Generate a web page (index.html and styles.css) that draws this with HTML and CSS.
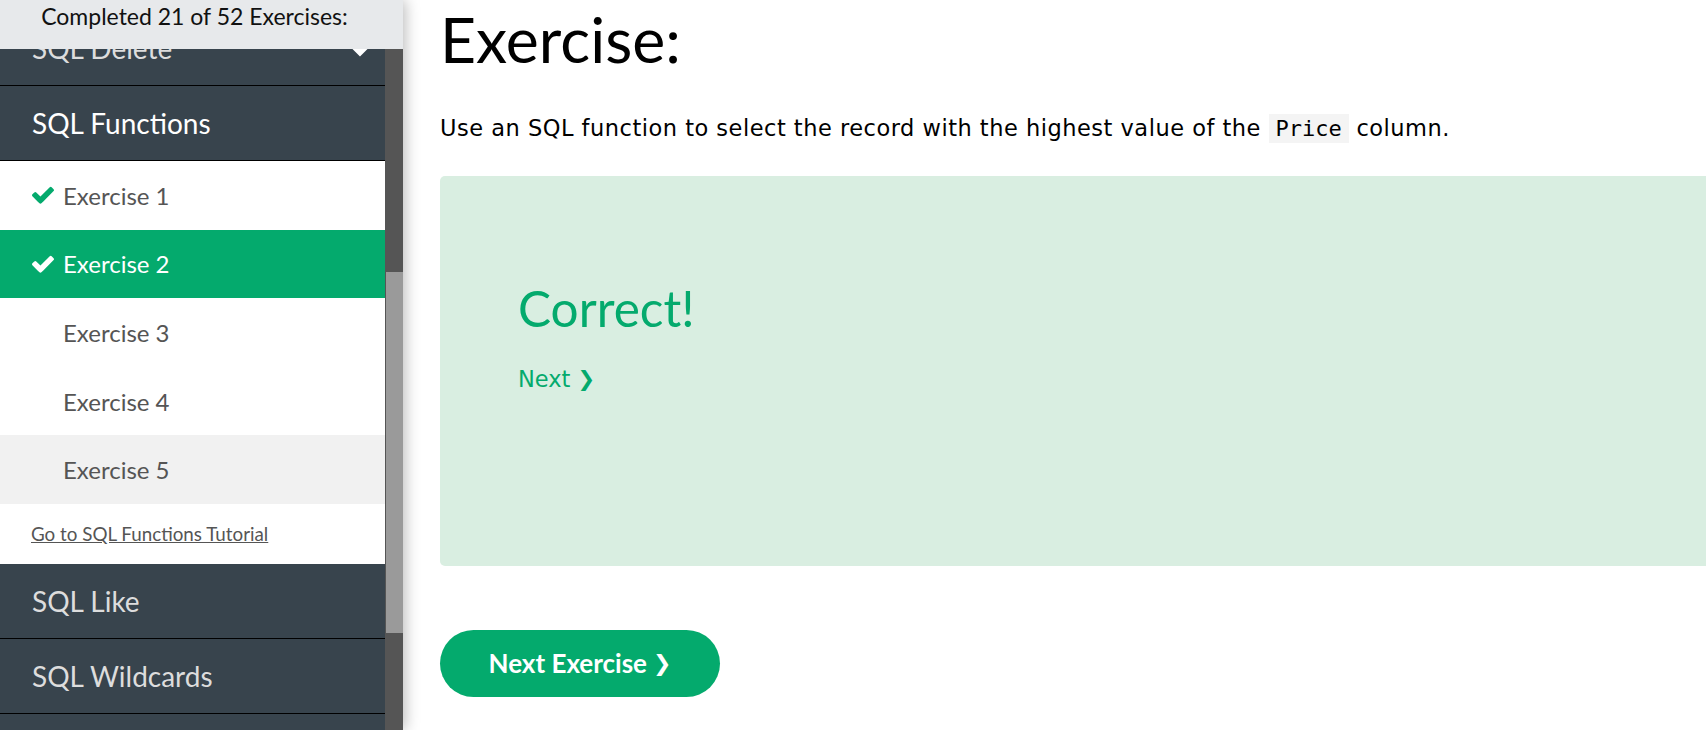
FILE: index.html
```html
<!DOCTYPE html>
<html lang="en">
<head>
<meta charset="utf-8">
<title>SQL Exercise</title>
<link rel="stylesheet" href="styles.css">
</head>
<body>
<div class="page">
  <aside class="sidebar">
    <div class="progress">Completed 21 of 52 Exercises:</div>
    <div class="side-body">
      <nav class="menu">
        <div class="cat cat-cut">
          <span>SQL Delete</span>
          <svg class="caret" viewBox="0 0 30 20" width="30" height="20"><polyline points="3,3 15,15 27,3" fill="none" stroke="#fff" stroke-width="5"/></svg>
        </div>
        <div class="cat cat-active">SQL Functions</div>
        <ul class="ex-list">
          <li class="ex done"><span class="icon"><svg viewBox="121 290 1550 1236" width="22" height="18"><path fill="#04AA6D" d="M1671 566q0 40-28 68l-724 724-136 136q-28 28-68 28t-68-28l-136-136-362-362q-28-28-28-68t28-68l136-136q28-28 68-28t68 28l294 295 656-657q28-28 68-28t68 28l136 136q28 28 28 68z"/></svg></span>Exercise 1</li>
          <li class="ex done current"><span class="icon"><svg viewBox="121 290 1550 1236" width="22" height="18"><path fill="#fff" d="M1671 566q0 40-28 68l-724 724-136 136q-28 28-68 28t-68-28l-136-136-362-362q-28-28-28-68t28-68l136-136q28-28 68-28t68 28l294 295 656-657q28-28 68-28t68 28l136 136q28 28 28 68z"/></svg></span>Exercise 2</li>
          <li class="ex"><span class="icon"></span>Exercise 3</li>
          <li class="ex"><span class="icon"></span>Exercise 4</li>
          <li class="ex hovered"><span class="icon"></span>Exercise 5</li>
        </ul>
        <div class="tut"><a href="#">Go to SQL Functions Tutorial</a></div>
        <div class="cat">SQL Like</div>
        <div class="cat">SQL Wildcards</div>
        <div class="cat cat-empty"></div>
      </nav>
      <div class="scrollbar"><div class="thumb"></div></div>
    </div>
  </aside>
  <main class="main">
    <h2 class="title">Exercise:</h2>
    <p class="desc">Use an SQL function to select the record with the highest value of the <code>Price</code> column.</p>
    <div class="result">
      <h2 class="correct">Correct!</h2>
      <a class="next-link" href="#">Next <span class="chev">&#10095;</span></a>
    </div>
    <button class="next-btn" type="button">Next Exercise <span class="chev">&#10095;</span></button>
  </main>
</div>
</body>
</html>
```
FILE: styles.css
```css
* { box-sizing: border-box; }
html, body { margin: 0; padding: 0; height: 100%; overflow: hidden; background: #fff; }
body { font-family: "DejaVu Sans", Verdana, sans-serif; color: #000; }

.page { display: flex; height: 730px; }

.sidebar {
  width: 403px;
  flex: none;
  display: flex;
  flex-direction: column;
  height: 730px;
  position: relative;
  z-index: 2;
  box-shadow: 2px 0 14px rgba(0,0,0,0.28);
  font-family: Lato, "Segoe UI", sans-serif;
}
.progress {
  height: 49px;
  flex: none;
  background: #E7E9EB;
  text-align: center;
  font-size: 23px;
  line-height: 27px;
  padding: 3px 14px 0 0;
  color: #111;
  position: relative;
  z-index: 1;
}
.side-body { flex: 1; display: flex; min-height: 0; }
.menu { width: 385px; flex: none; overflow: hidden; background: #38444D; }
.scrollbar { width: 18px; flex: none; background: #555; }
.thumb { margin-top: 223px; margin-left: 1px; height: 361px; background: #9a9a9a; }

.cat {
  height: 75px;
  border-bottom: 1px solid #000;
  display: flex;
  align-items: center;
  padding-left: 32px;
  font-size: 28px;
  color: #ddd;
  background: #38444D;
}
.cat-cut { margin-top: -38px; }
.cat-active { color: #fff; }
.caret { margin-left: auto; margin-right: 10px; }

.ex-list { list-style: none; margin: 0; padding: 0; background: #fff; }
.ex {
  height: 68.6px;
  display: flex;
  align-items: center;
  padding-left: 32px;
  font-size: 24px;
  color: #555;
  background: #fff;
}
.ex .icon { width: 22px; margin-right: 9px; display: flex; align-items: center; }
.ex.current { background: #04AA6D; color: #fff; }
.ex.hovered { background: #f1f1f1; }

.tut {
  height: 60px;
  display: flex;
  align-items: center;
  padding-left: 31px;
  background: #fff;
  font-size: 18.8px;
}
.tut a { color: #555; text-decoration: underline; }

.main { flex: 1; min-width: 0; padding-left: 37px; overflow: hidden; }
.title {
  margin: 1px 0 0;
  font-family: Lato, "Segoe UI", sans-serif;
  font-weight: 400;
  font-size: 62.5px;
  line-height: 76.8px;
}
.desc {
  margin: 35px 0 0;
  font-size: 22.5px;
  line-height: 30px;
  letter-spacing: 0.5px;
  white-space: nowrap;
}
.desc code {
  font-family: "DejaVu Sans Mono", "Liberation Mono", monospace;
  font-size: 22px;
  letter-spacing: 0;
  background: #f4f4f4;
  padding: 2px 7px;
}
.result {
  margin-top: 32px;
  height: 390px;
  background: #D9EEE1;
  border-radius: 5px 0 0 5px;
  padding: 102px 0 0 78px;
}
.correct {
  margin: 0;
  font-family: Lato, "Segoe UI", sans-serif;
  font-weight: 400;
  font-size: 49.5px;
  line-height: 60px;
  color: #04AA6D;
}
.next-link {
  display: block;
  margin-top: 26px;
  font-size: 22.5px;
  line-height: 30px;
  color: #04AA6D;
  text-decoration: none;
}
.next-link .chev { font-size: 21px; position: relative; top: -1px; }
.next-btn {
  margin-top: 64px;
  width: 280px;
  height: 67px;
  border: none;
  border-radius: 34px;
  background: #04AA6D;
  color: #fff;
  font-family: Lato, "Source Sans Pro", sans-serif;
  font-weight: 700;
  font-size: 26px;
  display: flex;
  align-items: center;
  justify-content: center;
  gap: 6px;
  padding: 0;
}
.next-btn .chev { font-family: "DejaVu Sans", sans-serif; font-size: 22px; font-weight: 700; }
```
